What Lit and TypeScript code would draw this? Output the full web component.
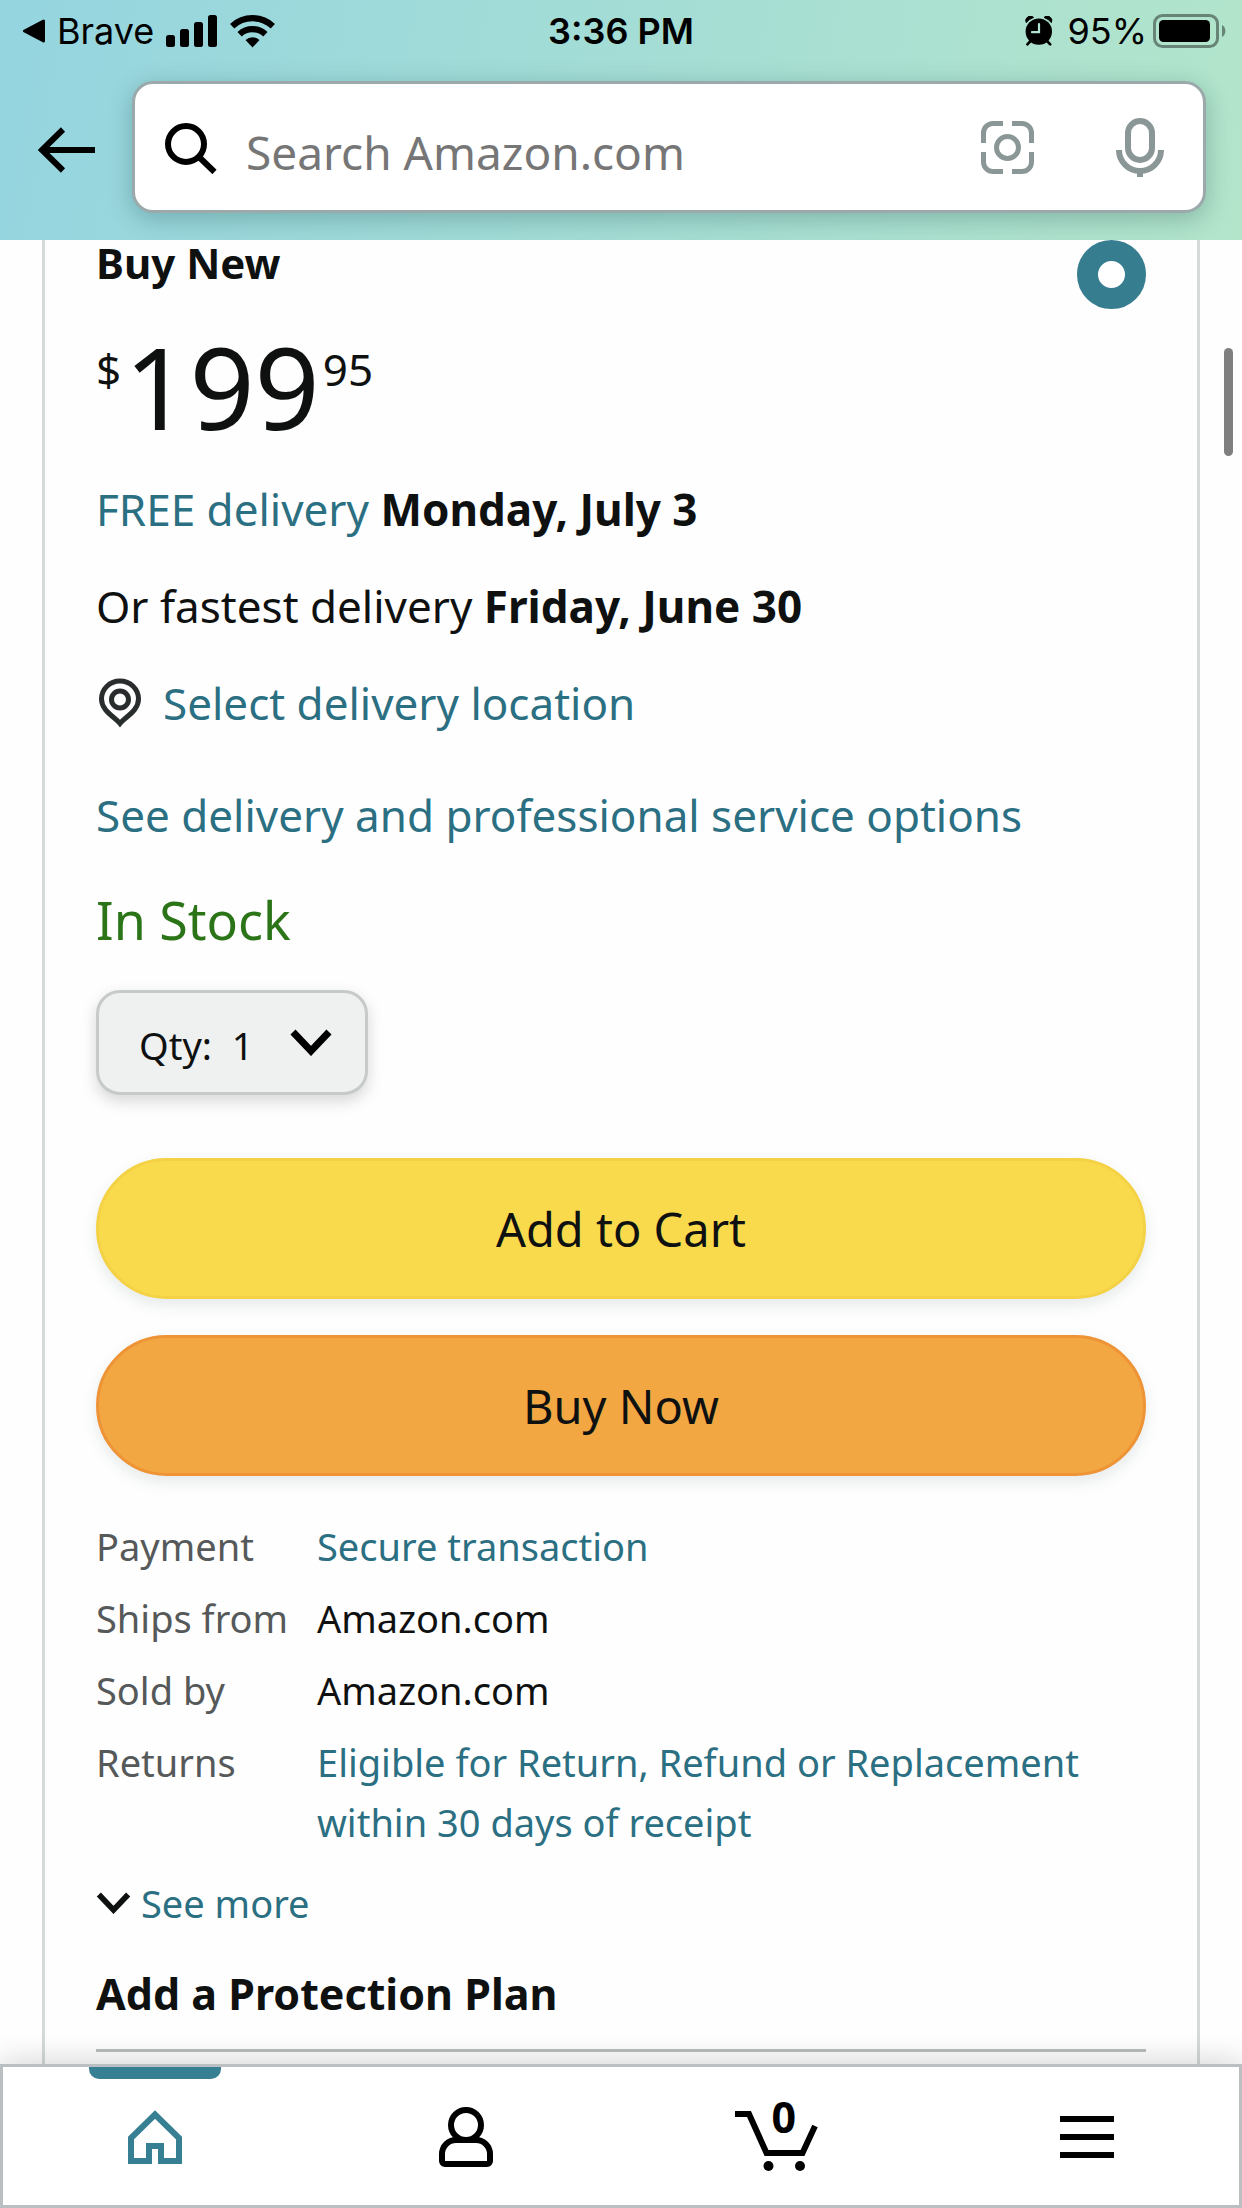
import { LitElement, html, css, svg } from "lit";
import { customElement, state } from "lit/decorators.js";

const chevron = svg`<path d="M3 3 L21 22 L39 3" fill="none" stroke="currentColor" stroke-width="7"/>`;

@customElement("status-bar")
class StatusBar extends LitElement {
  static styles = css`
    :host {
      display: grid;
      grid-template-columns: 1fr auto 1fr;
      align-items: center;
      height: 62px;
      padding: 0 16px;
      font: 400 36px/44px Inter, "Liberation Sans", sans-serif;
      color: #000;
    }
    svg { display: block; flex: none; }
    .side { display: flex; align-items: center; }
    .back { margin: 0 12px 0 7px; }
    .bars { margin-left: 12px; }
    .wifi { margin-left: 12px; }
    .time { font-weight: 600; }
    .end { justify-content: flex-end; }
    .alarm { margin-right: 14px; }
    .battery { margin-left: 6px; }
  `;
  render() {
    return html`
      <div class="side">
        <svg class="back" width="22" height="24" viewBox="0 0 22 24" aria-hidden="true">
          <path d="M1 12 L20 2 V22 Z" stroke="#000" stroke-width="3" stroke-linejoin="round" transform="translate(.5 0)"/>
        </svg>
        <span>Brave</span>
        <svg class="bars" width="52" height="32" viewBox="0 0 52 32" aria-hidden="true">
          <rect x="0" y="20" width="9" height="12" rx="2.5"/>
          <rect x="14" y="14" width="9" height="18" rx="2.5"/>
          <rect x="28" y="7" width="9" height="25" rx="2.5"/>
          <rect x="42" y="0" width="9" height="32" rx="2.5"/>
        </svg>
        <svg class="wifi" width="46" height="34" viewBox="0 0 46 34" aria-hidden="true">
          <g fill="none" stroke="#000" stroke-width="6.3">
            <path d="M2.2 12.2 A29.8 29.8 0 0 1 42.8 12.2"/>
            <path d="M9.6 20.2 A19 19 0 0 1 35.4 20.2"/>
          </g>
          <path d="M22.5 33.5 L15.5 26 A10.3 10.3 0 0 1 29.5 26 Z"/>
        </svg>
      </div>
      <span class="time">3:36 PM</span>
      <div class="side end">
        <svg class="alarm" width="28" height="30" viewBox="0 0 28 30" aria-hidden="true">
          <circle cx="13.8" cy="15.6" r="13.2"/>
          <path d="M1.2 6.6 A4.6 4.6 0 0 1 8.6 1.4 A16 16 0 0 0 1.2 6.6 Z M26.4 6.6 A4.6 4.6 0 0 0 19 1.4 A16 16 0 0 1 26.4 6.6 Z"
            stroke="#000" stroke-linejoin="round"/>
          <path d="M5.5 25 L2.4 28.4 M22 25 L25.2 28.4" stroke="#000" stroke-width="2.6" stroke-linecap="round"/>
          <path d="M14 8 V16.2 H7" fill="none" stroke="#b0e4d4" stroke-width="2.2" stroke-linecap="round"/>
        </svg>
        <span>95%</span>
        <svg class="battery" width="73" height="34" viewBox="0 0 73 34" aria-hidden="true">
          <rect x="1.5" y="1.5" width="63" height="31" rx="8" fill="none" stroke="#000" stroke-opacity=".42" stroke-width="3"/>
          <rect x="6" y="6" width="51" height="22" rx="4.5"/>
          <path d="M69 11 A7 7 0 0 1 69 23 Z" fill-opacity=".42"/>
        </svg>
      </div>
    `;
  }
}

@customElement("search-header")
class SearchHeader extends LitElement {
  static styles = css`
    :host { display: block; }
    svg { display: block; flex: none; }
    button {
      flex: none;
      margin: 0;
      padding: 0;
      border: 0;
      background: none;
      color: inherit;
    }
    .row {
      display: flex;
      align-items: center;
      gap: 37px;
      padding: 19px 36px 27px 38px;
    }
    .box {
      flex: 1;
      min-width: 0;
      box-sizing: border-box;
      height: 132px;
      display: flex;
      align-items: center;
      padding: 0 39px 0 30px;
      border: 3px solid #9ba9ab;
      border-radius: 21px;
      background: #fff;
      box-shadow: 0 6px 24px rgba(15, 60, 60, .28);
    }
    .field {
      flex: 1;
      min-width: 0;
      margin: 0 0 0 29px;
      padding: 9px 0 0;
      border: 0;
      outline: 0;
      background: none;
      font: 400 46px/60px "Noto Sans", sans-serif;
      color: #0f1111;
    }
    .field::placeholder { color: #767676; opacity: 1; }
    .tools { display: flex; align-items: center; gap: 82px; color: #8b9797; }
  `;
  render() {
    return html`
      <form class="row" role="search" @submit=${(e: Event) => e.preventDefault()}>
        <button type="button" aria-label="Back">
          <svg width="57" height="54" viewBox="0 0 57 54">
            <path d="M57 30 H4 M25 9.500 L4 30 L25 50.500" fill="none" stroke="#000" stroke-width="6"/>
          </svg>
        </button>
        <div class="box">
          <svg width="52" height="54" viewBox="0 0 52 54" aria-hidden="true">
            <g fill="none" stroke="#000" stroke-width="6">
              <circle cx="21" cy="24" r="18"/>
              <path d="M34 37 L49.500 52"/>
            </g>
          </svg>
          <input class="field" type="text" aria-label="Search" placeholder="Search Amazon.com" />
          <div class="tools">
            <button type="button" aria-label="Camera search">
              <svg width="53" height="53" viewBox="0 0 53 53" fill="none" stroke="currentColor" stroke-width="5">
                <circle cx="26.500" cy="26.500" r="11"/>
                <path d="M22 2.500 H12 A9.500 9.500 0 0 0 2.500 12 V22 M31 2.500 H41 A9.500 9.500 0 0 1 50.500 12 V22 M50.500 31 V41 A9.500 9.500 0 0 1 41 50.500 H31 M22 50.500 H12 A9.500 9.500 0 0 1 2.500 41 V31"/>
              </svg>
            </button>
            <button type="button" aria-label="Voice search">
              <svg width="48" height="59" viewBox="0 0 48 59" fill="none" stroke="currentColor" stroke-width="6">
                <rect x="12" y="3" width="24" height="39" rx="12"/>
                <path d="M3 32 A21 21 0 0 0 45 32 M24 53 V59"/>
              </svg>
            </button>
          </div>
        </div>
      </form>
    `;
  }
}

@customElement("buy-box")
class BuyBox extends LitElement {
  @state() private quantity = "1";

  static styles = css`
    :host {
      display: block;
      margin: 0 42px;
      padding: 0 51px 12px;
      border: solid #d5d9d9;
      border-width: 0 3px;
      font: 400 44px/60px "Noto Sans", sans-serif;
      color: #0f1111;
    }
    svg { display: block; flex: none; }
    a { color: #2b6f82; text-decoration: none; }
    p, h2 { margin: 0; }
    strong { font-weight: 700; }
    .choice { display: flex; justify-content: space-between; align-items: flex-start; }
    .choice label { font-size: 42px; font-weight: 700; line-height: 46px; }
    .radio {
      appearance: none;
      box-sizing: border-box;
      width: 69px;
      height: 69px;
      margin: 0;
      border: 21px solid #367d90;
      border-radius: 50%;
      background: #fff;
    }
    .price { display: flex; align-items: flex-start; gap: 3px; margin-top: 21px; }
    .small { padding-top: 13px; line-height: 52px; }
    .whole { font-size: 114px; line-height: 112px; }
    .delivery { display: flex; flex-direction: column; gap: 37px; margin-top: 37px; }
    .location { display: flex; align-items: center; gap: 20px; }
    .options { margin-top: 52px; }
    .stock { margin-top: 45px; font-size: 52px; color: #2b7518; }
    .qty { display: inline-grid; align-items: center; margin-top: 40px; vertical-align: top; }
    .qty select, .qty svg { grid-area: 1 / 1; }
    .qty svg { justify-self: end; margin-right: 36px; pointer-events: none; color: #000; }
    .qty select {
      appearance: none;
      box-sizing: border-box;
      width: 272px;
      height: 105px;
      margin: 0;
      padding: 4px 100px 0 40px;
      border: 3px solid #c6caca;
      border-radius: 24px;
      background: #eff1f1;
      box-shadow: 0 6px 15px rgba(15, 17, 17, .17);
      font: 400 38px/52px "Noto Sans", sans-serif;
      color: #0f1111;
    }
    .actions { display: flex; flex-direction: column; gap: 36px; margin-top: 63px; }
    .actions button {
      height: 141px;
      margin: 0;
      border: 3px solid #f4d145;
      border-radius: 71px;
      background: #f8da4c;
      box-shadow: 0 6px 15px rgba(15, 60, 60, .1);
      font: 400 47px/60px "Noto Sans", sans-serif;
      color: #0f1111;
    }
    .actions .buy { border-color: #ee9336; background: #f2a742; }
    .facts {
      margin-top: 40px;
      border-collapse: collapse;
      font-size: 38px;
      line-height: 60px;
      text-align: left;
    }
    .facts th, .facts td { padding: 0 0 12px; vertical-align: top; font-weight: 400; }
    .facts th { width: 221px; color: #565959; white-space: nowrap; }
    .more { display: flex; align-items: center; gap: 10px; margin-top: 9px; font-size: 38px; }
    .more svg { color: #0f1111; }
    .plan {
      margin-top: 31px;
      padding-bottom: 25px;
      border-bottom: 3px solid #b9bdbd;
      font-size: 43px;
      line-height: 60px;
    }
  `;

  private facts = [
    { name: "Payment", value: "Secure transaction", link: true },
    { name: "Ships from", value: "Amazon.com", link: false },
    { name: "Sold by", value: "Amazon.com", link: false },
    { name: "Returns", value: "Eligible for Return, Refund or Replacement within 30 days of receipt", link: true },
  ];

  render() {
    return html`
      <div class="choice">
        <label for="new">Buy New</label>
        <input class="radio" id="new" name="condition" type="radio" checked />
      </div>
      <div class="price">
        <span class="small">$</span><span class="whole">199</span><span class="small">95</span>
      </div>
      <div class="delivery">
        <p><a href="#free">FREE delivery</a> <strong>Monday, July 3</strong></p>
        <p>Or fastest delivery <strong>Friday, June 30</strong></p>
        <a class="location" href="#location">
          <svg width="47" height="50" viewBox="0 0 47 50" fill="none" stroke="#2a2d2e" aria-hidden="true">
            <path d="M24 45.500 C19 39 5.500 33 5.500 21 A18.500 18 0 0 1 42.500 21 C42.500 33 29 39 24 45.500 Z" stroke-width="5"/>
            <circle cx="24" cy="21.500" r="8.500" stroke-width="5"/>
          </svg>
          <span>Select delivery location</span>
        </a>
      </div>
      <p class="options"><a href="#options">See delivery and professional service options</a></p>
      <p class="stock">In Stock</p>
      <div class="qty">
        <select aria-label="Quantity" .value=${this.quantity}
          @change=${(e: Event) => (this.quantity = (e.target as HTMLSelectElement).value)}>
          ${["1", "2", "3"].map((n) => html`<option value=${n}>Qty:\u00a0\u00a0${n}</option>`)}
        </select>
        <svg width="42" height="27" viewBox="0 0 42 27" aria-hidden="true">${chevron}</svg>
      </div>
      <div class="actions">
        <button type="button">Add to Cart</button>
        <button type="button" class="buy">Buy Now</button>
      </div>
      <table class="facts">
        <tbody>
          ${this.facts.map((f) => html`
            <tr>
              <th scope="row">${f.name}</th>
              <td>${f.link ? html`<a href="#details">${f.value}</a>` : f.value}</td>
            </tr>`)}
        </tbody>
      </table>
      <a class="more" href="#more">
        <svg width="35" height="22" viewBox="0 0 42 27" aria-hidden="true">${chevron}</svg>
        <span>See more</span>
      </a>
      <h2 class="plan">Add a Protection Plan</h2>
    `;
  }
}

@customElement("tab-bar")
class TabBar extends LitElement {
  static styles = css`
    :host {
      display: block;
      background: #fff;
      box-shadow: 0 0 30px rgba(15, 17, 17, .2);
    }
    nav {
      display: grid;
      grid-template-columns: repeat(4, 1fr);
      height: 144px;
      box-shadow: inset 0 0 0 3px #babfc1;
    }
    svg { display: block; }
    a {
      position: relative;
      display: grid;
      place-items: center;
      padding-top: 2px;
      color: #000;
      text-decoration: none;
    }
    .current { color: #377f93; }
    .current::before {
      content: "";
      position: absolute;
      top: 3px;
      width: 132px;
      height: 12px;
      border-radius: 0 0 10px 10px;
      background: currentColor;
    }
    .cart { position: relative; }
    .count {
      position: absolute;
      left: 0;
      right: 0;
      top: -16px;
      padding-left: 15px;
      text-align: center;
      font: 700 43px/60px "Noto Sans", sans-serif;
    }
  `;
  render() {
    return html`
      <nav>
        <a class="current" href="#home" aria-label="Home" aria-current="page">
          <svg width="54" height="54" viewBox="0 0 54 54" fill="none" stroke="currentColor" stroke-width="6">
            <path d="M3 51 V28 L27 4.500 L51 28 V51 H33 V36 H21 V51 Z"/>
          </svg>
        </a>
        <a href="#account" aria-label="Account">
          <svg width="54" height="60" viewBox="0 0 54 60" fill="none" stroke="currentColor" stroke-width="6">
            <circle cx="27" cy="18" r="15"/>
            <path d="M17 33 H37 A14 14 0 0 1 51 47 V54 A3 3 0 0 1 48 57 H6 A3 3 0 0 1 3 54 V47 A14 14 0 0 1 17 33 Z"/>
          </svg>
        </a>
        <a href="#cart" aria-label="Cart, 0 items">
          <span class="cart">
            <svg width="83" height="68" viewBox="0 0 83 68">
              <path d="M0 11 H14 L31.500 50 H67.500 L80 23" fill="none" stroke="currentColor" stroke-width="6"/>
              <circle cx="33.500" cy="63" r="5"/>
              <circle cx="65" cy="63" r="5"/>
            </svg>
            <span class="count">0</span>
          </span>
        </a>
        <a href="#menu" aria-label="Menu">
          <svg width="54" height="42" viewBox="0 0 54 42" stroke="currentColor" stroke-width="6">
            <path d="M0 3 H54 M0 21 H54 M0 39 H54"/>
          </svg>
        </a>
      </nav>
    `;
  }
}

@customElement("app-root")
class AppRoot extends LitElement {
  static styles = css`
    :host {
      position: relative;
      display: flex;
      flex-direction: column;
      min-height: 100vh;
      background: #fefefe;
    }
    header {
      position: sticky;
      top: 0;
      z-index: 1;
      overflow: hidden;
      background: linear-gradient(100deg, #95d5e0, #b3e5cb);
    }
    main { flex: 1; display: grid; }
    tab-bar { position: sticky; bottom: 0; }
    .thumb {
      position: absolute;
      top: 348px;
      right: 9px;
      width: 9px;
      height: 108px;
      border-radius: 5px;
      background: #7f7f7f;
    }
  `;
  render() {
    return html`
      <header>
        <status-bar></status-bar>
        <search-header></search-header>
      </header>
      <main><buy-box></buy-box></main>
      <tab-bar></tab-bar>
      <div class="thumb"></div>
    `;
  }
}
